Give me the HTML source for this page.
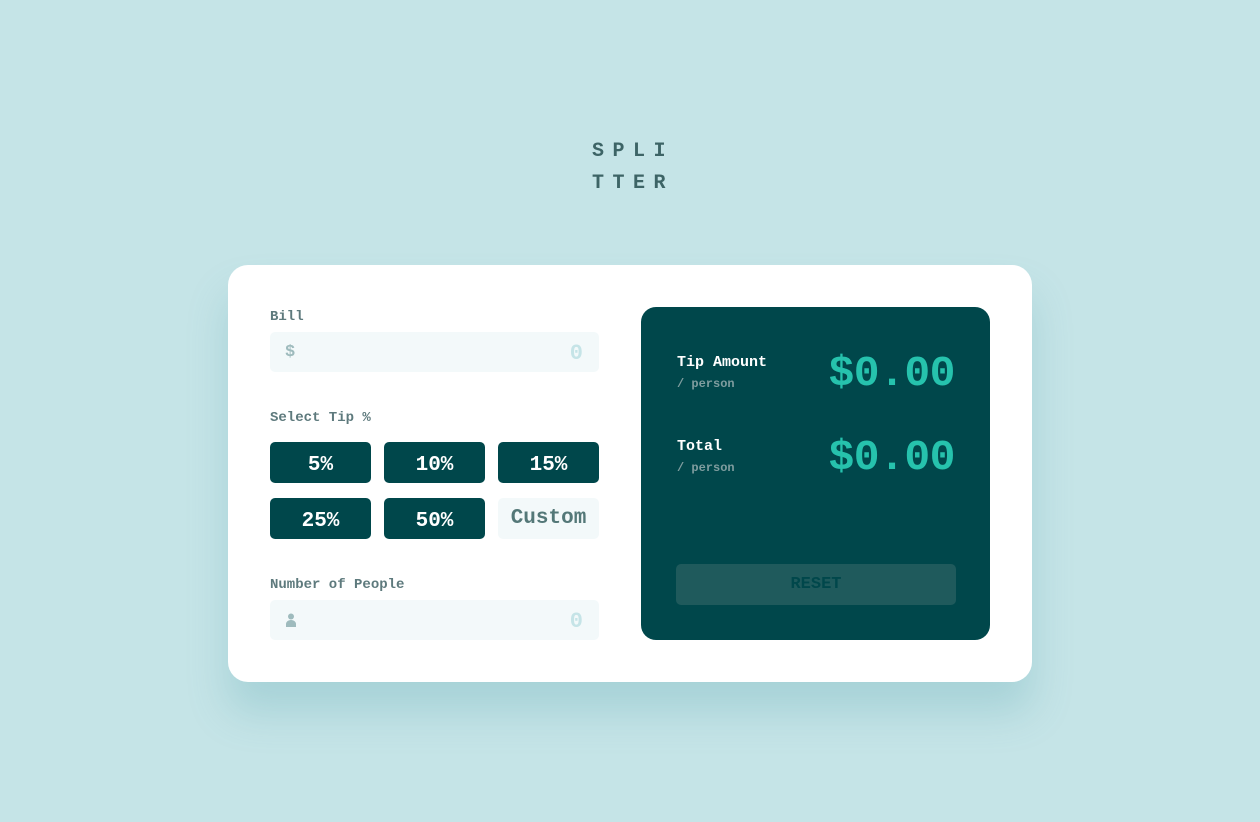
<!DOCTYPE html>
<html><head><style>
body{margin:0;width:1260px;height:822px;background:#c5e4e7;font-family:"Liberation Mono",monospace;font-weight:bold;position:relative;overflow:hidden}
.a{position:absolute}
.title{left:592px;top:136px;color:#3d6466;font-size:20px;letter-spacing:8.5px;line-height:32px;width:100px}
.card{left:228px;top:265px;width:804px;height:417px;background:#fff;border-radius:20px;box-shadow:0 30px 40px rgba(80,160,170,.25)}
.lbl{color:#5e7a7d;font-size:14px}
.inp{background:#f3f9fa;border-radius:5px;width:329px;height:40px}
.inp .v{position:absolute;right:16px;top:9px;color:#c5e4e7;font-size:22px}
.btn{background:#00474b;border-radius:5px;width:101px;height:41px;color:#fff;font-size:21px;text-align:center;line-height:47px}
.dark{left:641px;top:307px;width:349px;height:333px;background:#00474b;border-radius:15px}
.w{color:#fff;font-size:15px}
.s{color:#7f9d9f;font-size:12px}
.big{color:#26c2ad;font-size:43px;letter-spacing:-0.5px}
</style></head><body>
<div class="a title">SPLI<br>TTER</div>
<div class="a card"></div>
<div class="a lbl" style="left:270px;top:309px">Bill</div>
<div class="a inp" style="left:270px;top:332px"><span class="a" style="left:15px;top:11px;color:#9ebbbd;font-size:17px">$</span><span class="v">0</span></div>
<div class="a lbl" style="left:270px;top:410px">Select Tip %</div>
<div class="a btn" style="left:270px;top:442px">5%</div>
<div class="a btn" style="left:384px;top:442px">10%</div>
<div class="a btn" style="left:498px;top:442px">15%</div>
<div class="a btn" style="left:270px;top:498px">25%</div>
<div class="a btn" style="left:384px;top:498px">50%</div>
<div class="a btn" style="left:498px;top:498px;background:#f3f9fa;color:#547878;line-height:41px">Custom</div>
<div class="a lbl" style="left:270px;top:577px">Number of People</div>
<div class="a inp" style="left:270px;top:600px"><svg class="a" style="left:16px;top:13px" width="10" height="14" viewBox="0 0 10 14"><circle cx="5" cy="3.5" r="3" fill="#9ebbbd"/><path d="M0 14v-3c0-2 2-4 5-4s5 2 5 4v3z" fill="#9ebbbd"/></svg><span class="v">0</span></div>
<div class="a dark"></div>
<div class="a w" style="left:677px;top:354px">Tip Amount</div>
<div class="a s" style="left:677px;top:377px">/ person</div>
<div class="a big" style="right:305px;top:349px">$0.00</div>
<div class="a w" style="left:677px;top:438px">Total</div>
<div class="a s" style="left:677px;top:461px">/ person</div>
<div class="a big" style="right:305px;top:433px">$0.00</div>
<div class="a" style="left:676px;top:564px;width:280px;height:41px;background:#1f5a5c;border-radius:5px"></div>
<div class="a" style="left:676px;top:575px;width:280px;text-align:center;color:#00474b;font-size:17px">RESET</div>
</body></html>
